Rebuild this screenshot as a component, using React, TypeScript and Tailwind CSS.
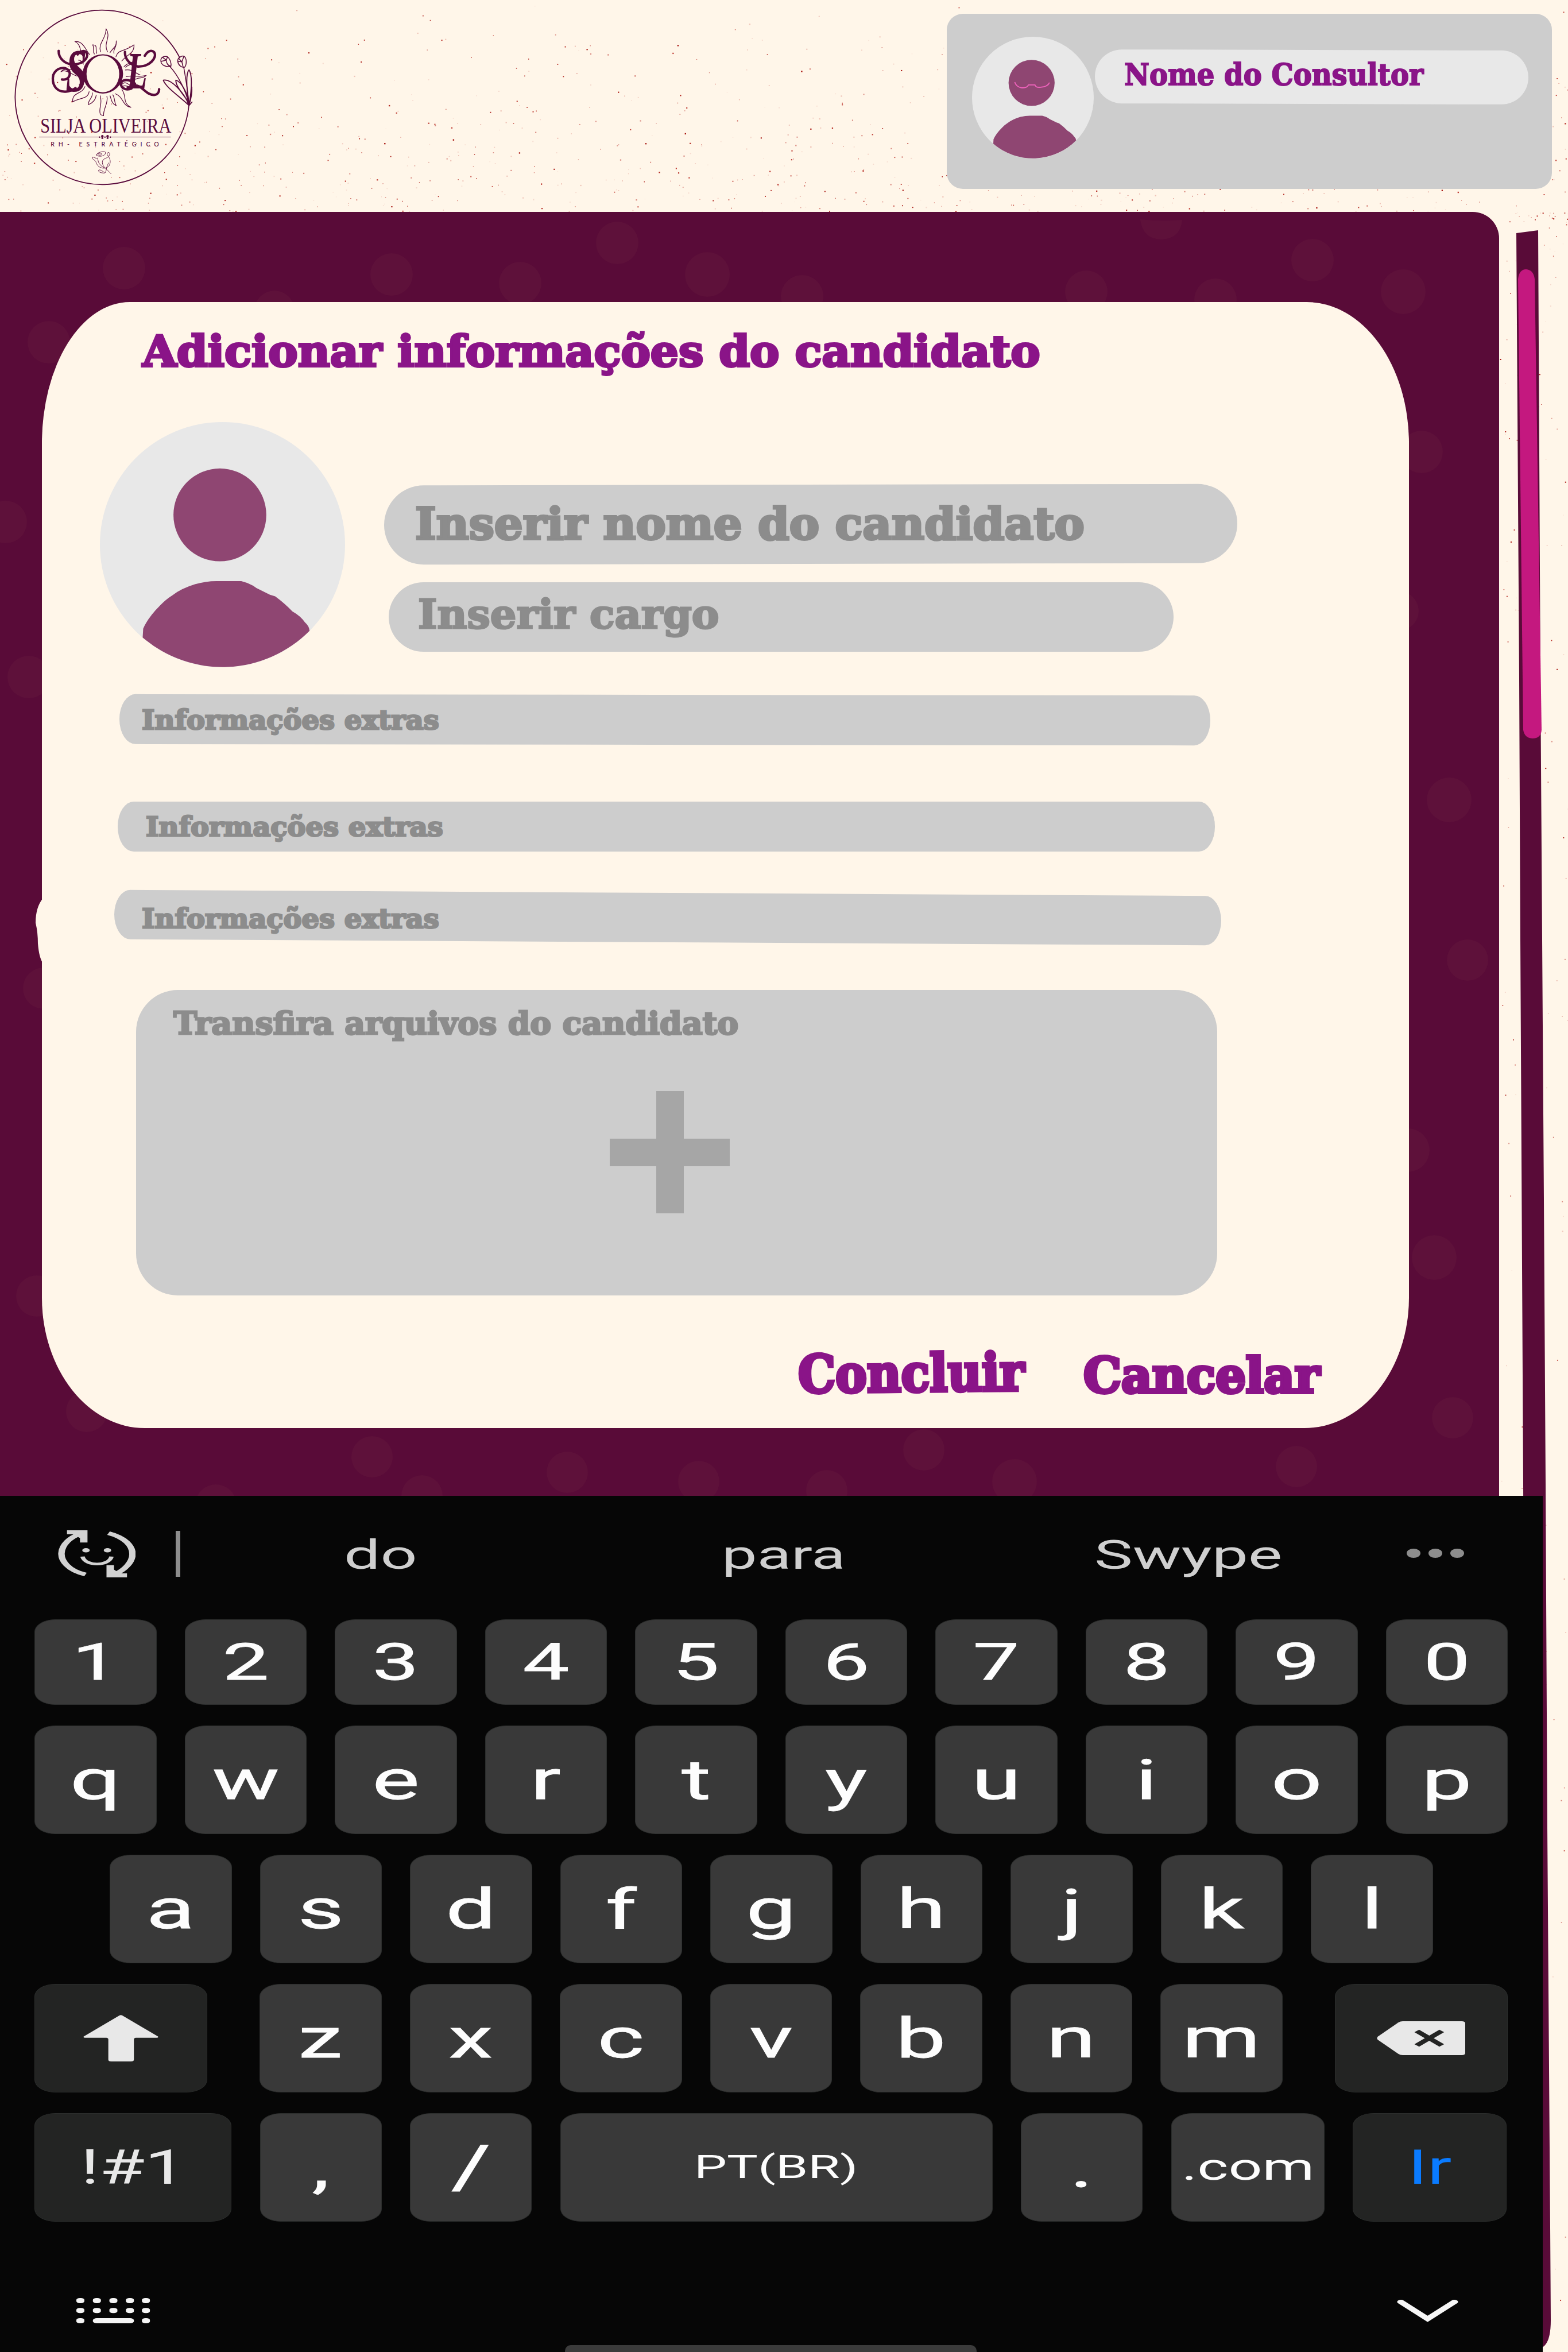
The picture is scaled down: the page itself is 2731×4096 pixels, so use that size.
import { useLayoutEffect, useRef, useState } from "react";
import type { ReactNode } from "react";

const SLAB = "font-['DejaVu_Serif',serif] font-bold leading-none";

/** Text stretched horizontally so that it fills exactly `width` pixels. */
function FitText({ width, className = "", children }: { width: number; className?: string; children: ReactNode }) {
  const ref = useRef<HTMLSpanElement>(null);
  const [scale, setScale] = useState(1);
  useLayoutEffect(() => {
    if (ref.current) setScale(width / ref.current.offsetWidth);
  }, [width]);
  return (
    <span className="block shrink-0" style={{ width }}>
      <span
        ref={ref}
        className={`inline-block origin-left whitespace-nowrap align-top ${className}`}
        style={{ transform: `scaleX(${scale})` }}
      >
        {children}
      </span>
    </span>
  );
}

function makeSpecks() {
  let seed = 20417;
  const rnd = () => {
    seed = (seed * 1103515245 + 12345) % 2147483648;
    return seed / 2147483648;
  };
  const tones = ["#a8140f", "#c2453c", "#d98a80", "#efc4b8", "#b52a22", "#f5d9cd"];
  const out: { x: number; y: number; s: number; c: string }[] = [];
  for (let i = 0; i < 950; i++) {
    out.push({ x: rnd() * 2731, y: Math.sqrt(rnd()) * 370, s: 0.9 + rnd() * 1.5, c: tones[Math.floor(rnd() * 6)] });
  }
  for (let i = 0; i < 170; i++) {
    const t = rnd();
    out.push({ x: 2612 + rnd() * 119, y: 370 + t * t * 3726, s: 0.9 + rnd() * 1.3, c: tones[Math.floor(rnd() * 6)] });
  }
  return out;
}
const SPECKS = makeSpecks();

function Specks() {
  return (
    <svg className="absolute inset-0" width="2731" height="4096" viewBox="0 0 2731 4096" aria-hidden>
      {SPECKS.map((p, i) => (
        <rect key={i} x={p.x} y={p.y} width={p.s} height={p.s} fill={p.c} />
      ))}
    </svg>
  );
}

function Logo() {
  return (
    <svg className="block h-[364px] w-[382px]" viewBox="0 0 1260 1200" fill="none" stroke="#5a0b3d" strokeWidth="4" strokeLinecap="round" strokeLinejoin="round">
      <path strokeWidth="6" d="M1032 330A500 501 0 1 0 1085 605" />
      {/* sun rays */}
      <path d="M578 298C560 250 612 220 609 165C642 215 590 245 618 298M542 310C530 290 544 272 532 257C566 258 545 285 556 306M632 302C648 275 672 268 668 234C672 275 648 280 655 306M666 326C680 280 712 300 770 257C772 310 730 310 700 350M515 313C490 285 480 235 430 238C470 255 455 300 482 330" />
      <path d="M720 402C760 395 775 420 805 430M724 440C770 430 800 445 840 433C820 455 800 440 780 455M712 384C730 358 755 365 774 348C755 375 735 370 722 386M350 412C370 385 420 405 460 395M350 412C380 395 405 425 440 436M450 345C465 345 470 355 480 368M455 484C465 486 470 484 478 482" />
      <path d="M488 497C470 545 415 525 417 585C460 560 505 570 512 526M530 533C535 565 505 570 508 601C535 590 550 570 553 546M576 550C590 600 565 620 576 655C585 665 590 665 595 664C592 625 625 590 614 553M632 550C640 570 640 595 668 607C655 585 660 560 648 544M662 538C710 555 705 612 752 616C700 590 730 550 700 515M700 485C715 465 735 480 750 492M705 495C720 490 735 495 745 503" />
      {/* sun disc */}
      <path fill="#5a0b3d" stroke="none" fillRule="evenodd" d="M591 311A116 113 0 1 0 591 537A116 113 0 1 0 591 311ZM591 318A94 106 0 1 1 591 530A94 106 0 1 1 591 318Z" />
      {/* monogram letters with their swashes */}
      <g fill="#5a0b3d" stroke="none" fontFamily="'Liberation Serif', serif" fontStyle="italic" fontWeight="700">
        <text x="378" y="524" fontSize="346" textLength="122" lengthAdjust="spacingAndGlyphs">S</text>
        <text x="728" y="508" fontSize="300" textLength="118" lengthAdjust="spacingAndGlyphs">L</text>
      </g>
      <path strokeWidth="14" d="M337 292C336 334 372 370 424 370C490 366 512 320 496 300C485 288 460 292 446 312M356 456C395 462 408 430 396 406C375 380 325 385 306 430C295 480 320 530 378 526C400 524 420 516 434 506" />
      <path strokeWidth="14" d="M718 298C716 336 744 372 792 382C860 384 905 330 886 300C870 284 846 294 832 320M770 488C820 490 835 545 885 545C905 544 915 530 914 512M775 480C740 450 700 455 694 480C695 510 730 520 755 508" />
      {/* tulips */}
      <path strokeWidth="5" d="M978 384C1020 430 1070 520 1085 600M1056 388C1066 450 1080 520 1085 600M924 350C922 320 960 320 964 328C980 340 985 370 982 380C960 388 925 375 924 350ZM935 330L955 345L962 327M928 352L955 345C955 360 965 378 980 380M1021 350C1020 330 1045 318 1058 323C1075 335 1072 375 1060 386C1040 390 1022 370 1021 350ZM1028 336L1045 355L1056 324M1022 352L1045 355L1052 384" />
      <path strokeWidth="6" d="M1085 605C1040 560 950 500 938 460C985 450 1065 540 1085 605M1085 590C1060 550 1010 500 1010 460C1040 465 1080 540 1085 590M1085 590C1070 500 1068 420 1086 401C1105 430 1103 500 1087 600C1100 560 1104 530 1102 500M1087 605L1103 586" />
      <g fill="#5a0b3d" stroke="none">
        <text x="232" y="760" fontSize="117" fontFamily="'Liberation Serif', serif" textLength="752" lengthAdjust="spacingAndGlyphs">SILJA OLIVEIRA</text>
        <text x="291" y="842" fontSize="35" fontFamily="Lato, sans-serif" fontWeight="500" textLength="622">RH- ESTRATÉGICO</text>
        <circle cx="588" cy="782" r="7" />
        <circle cx="588" cy="792" r="6" />
        <circle cx="618" cy="782" r="7" />
        <circle cx="618" cy="792" r="6" />
        <circle cx="603" cy="787" r="4" />
        <circle cx="572" cy="787" r="4" />
        <circle cx="634" cy="787" r="4" />
      </g>
      <path strokeWidth="2" d="M226 787H576M630 787H980" />
      {/* rose */}
      <path strokeWidth="3" d="M556 893C545 880 590 865 605 873C612 890 580 905 556 893C550 885 575 875 585 882C590 890 570 893 566 890M530 903C540 898 545 912 560 908M530 903C528 920 548 915 553 935C565 970 610 975 628 950C640 925 630 905 616 890C612 870 635 872 630 888C620 915 585 905 588 935C592 960 610 968 638 998M562 910C562 935 575 950 600 965M625 935C605 960 615 995 598 994C585 993 565 990 566 978C575 970 590 985 600 990" />
    </svg>
  );
}

function Avatar({ className, glasses = false }: { className: string; glasses?: boolean }) {
  return (
    <svg className={className} viewBox="0 0 470 470" preserveAspectRatio="none">
      <circle cx="235" cy="235" r="235" fill="#e8e8e8" />
      <circle cx="230" cy="178" r="89" fill="#8f4672" />
      <path
        fill="#8f4672"
        d="M82 413L83 396Q92 375 115 352Q126 340 139 332Q156 319 182 311Q205 304 230 305H271Q290 310 300 318L326 331L336 334Q355 348 369 363Q385 372 393 384Q401 391 402 400A235 235 0 0 1 82 413Z"
      />
      {glasses && (
        <path fill="none" stroke="#f063bd" strokeWidth="4" d="M165 175Q170 192 190 197Q212 199 218 186H243Q246 197 265 195Q292 193 299 177" />
      )}
    </svg>
  );
}

const DOTS: [number, number, number][] = [
  [216, 467, 37], [682, 478, 37], [478, 541, 35], [906, 493, 37], [1075, 423, 37], [1232, 478, 39],
  [1397, 516, 37], [85, 596, 37], [10, 909, 37], [50, 1179, 37], [1892, 508, 37], [2117, 522, 37],
  [2286, 453, 37], [2444, 508, 39], [2476, 787, 37], [2437, 1064, 34], [76, 1721, 36], [64, 2257, 36],
  [151, 2458, 36], [648, 2537, 36], [735, 2605, 36], [376, 2621, 36], [988, 2564, 36], [1217, 2580, 36],
  [1440, 2596, 36], [1609, 2525, 36], [1767, 2580, 39], [2258, 2554, 36], [2524, 1393, 39], [2556, 1672, 36],
  [2452, 2003, 38], [2498, 2190, 39], [2530, 2469, 36],
];

function PanelDots() {
  return (
    <svg className="absolute inset-0" width="2611" height="2236" viewBox="0 369 2611 2236" fill="#5e113a" aria-hidden>
      {DOTS.map(([x, y, r]) => (
        <circle key={`${x}-${y}`} cx={x} cy={y} r={r} />
      ))}
      <path d="M1986 382Q2022 386 2059 383Q2056 416 2022 417Q1990 416 1986 382Z" />
    </svg>
  );
}

function ScrollBar() {
  return (
    <svg className="absolute inset-0" width="2731" height="4096" viewBox="0 0 2731 4096" aria-hidden>
      <path fill="#590b38" d="M2641 406L2679 401L2683 1183L2689 2089L2692 2585L2695 3184L2700 3879L2701 4041Q2701 4080 2686 4088H2660L2653 2585L2648 1636L2646 1183Z" />
      <path fill="#c4187f" d="M2644 486Q2646 469 2658 469Q2671 470 2673 486L2685 1271Q2684 1286 2669 1286Q2655 1285 2653 1271Z" />
    </svg>
  );
}

function Field({ className, bg, children }: { className: string; bg: string; children: ReactNode }) {
  return (
    <div className={`relative flex items-center text-[#8c8c8c] ${className}`}>
      <span className={`absolute inset-0 bg-[#cdcdcd] ${bg}`} />
      <div className="relative">{children}</div>
    </div>
  );
}

function CandidateForm() {
  return (
    <section className="relative mt-[157px] ml-[73px] flex h-[1961px] w-[2381px] flex-col rounded-[153px_178px_182px_179px/246px_246px_227px_227px] bg-[#fff6e9]">
      <svg className="absolute top-[1038px] -left-[11px] h-[114px] w-[13px]" viewBox="0 0 13 114" fill="#fff6e9">
        <path d="M13 0Q0 16 0 43Q4 60 4 79Q6 104 13 114Z" />
      </svg>
      <h1 className="mt-[49px] ml-[175px] text-[75px] leading-none text-[#8a1488]">
        <FitText width={1564} className={`${SLAB} [-webkit-text-stroke:4px_#8a1488]`}>Adicionar informações do candidato</FitText>
      </h1>
      <div className="mt-[85px] ml-[101px] flex h-[427px]">
        <Avatar className="size-[427px] shrink-0" />
        <div className="mt-[109px] ml-[68px] flex flex-col gap-[32px]">
          <Field className="h-[138px] w-[1486px] pl-[54px]" bg="rounded-[69px] -skew-y-[0.1deg]">
            <FitText width={1166} className={`${SLAB} text-[76px] [-webkit-text-stroke:4px_#8c8c8c]`}>Inserir nome do candidato</FitText>
          </Field>
          <Field className="ml-[8px] h-[121px] w-[1367px] pb-[10px] pl-[51px]" bg="rounded-[62px]">
            <FitText width={524} className={`${SLAB} text-[69px] [-webkit-text-stroke:3px_#8c8c8c]`}>Inserir cargo</FitText>
          </Field>
        </div>
      </div>
      <Field className="mt-[48px] ml-[135px] h-[87px] w-[1900px] pl-[39px]" bg="rounded-[28px/43px] skew-y-[0.07deg]">
        <FitText width={518} className={`${SLAB} text-[47px] [-webkit-text-stroke:3px_#8c8c8c]`}>Informações extras</FitText>
      </Field>
      <Field className="mt-[99px] ml-[132px] h-[87px] w-[1911px] pl-[49px]" bg="rounded-[28px/43px]">
        <FitText width={518} className={`${SLAB} text-[47px] [-webkit-text-stroke:3px_#8c8c8c]`}>Informações extras</FitText>
      </Field>
      <Field className="mt-[72px] ml-[126px] h-[86px] w-[1928px] pl-[48px] pt-[3px]" bg="rounded-[28px/43px] skew-y-[0.32deg]">
        <FitText width={518} className={`${SLAB} text-[47px] [-webkit-text-stroke:3px_#8c8c8c]`}>Informações extras</FitText>
      </Field>
      <div className="mt-[83px] ml-[164px] flex h-[532px] w-[1883px] flex-col rounded-[73px] bg-[#cdcdcd] pt-[31px] text-[#8c8c8c]">
        <div className="ml-[65px]">
          <FitText width={984} className={`${SLAB} text-[54px] [-webkit-text-stroke:3px_#8c8c8c]`}>Transfira arquivos do candidato</FitText>
        </div>
        <svg className="mt-[91px] ml-[825px] h-[213px] w-[209px]" viewBox="0 0 209 213" fill="#a6a6a6">
          <path d="M81 0H129V83H209V131H129V213H81V131H0V83H81Z" />
        </svg>
      </div>
      <div className="mt-[88px] ml-[1317px] flex gap-[103px] text-[#8a1488]">
        <button className="block -rotate-[0.6deg]">
          <FitText width={394} className={`${SLAB} text-[90px] [-webkit-text-stroke:6px_#8a1488]`}>Concluir</FitText>
        </button>
        <button className="mt-[10px] block">
          <FitText width={412} className={`${SLAB} text-[84px] [-webkit-text-stroke:6px_#8a1488]`}>Cancelar</FitText>
        </button>
      </div>
    </section>
  );
}

function Key({ children, className = "", dark = false, row = "h-[189px]" }: { children: ReactNode; className?: string; dark?: boolean; row?: string }) {
  return (
    <div className={`flex shrink-0 items-center justify-center rounded-[36px/22px] border border-[#2b2d2c] ${row} ${dark ? "bg-[#232423]" : "bg-[#393939]"} ${className}`}>
      {children}
    </div>
  );
}

function Glyph({ children, className = "text-[96px]" }: { children: ReactNode; className?: string }) {
  return <span className={`inline-block scale-x-[1.62] leading-none font-normal text-[#fdfdfd] [-webkit-text-stroke:0.8px_#fdfdfd] ${className}`}>{children}</span>;
}

function Keyboard() {
  return (
    <div className="relative flex h-[1491px] w-[2687px] flex-col bg-[#060606] font-['Roboto',sans-serif]">
      <div className="flex h-[215px] text-[70px] leading-[1] text-[#cfcfcf]">
        <svg className="mt-[60px] ml-[101px] h-[82px] w-[135px] shrink-0" viewBox="116 160 155 165" preserveAspectRatio="none" fill="none" stroke="#d2d2d2" strokeWidth="13">
          <path d="M171 315C135 300 122 265 123 240C124 210 140 185 160 172M217 170C250 185 265 215 265 243C265 270 250 300 228 315" />
          <path strokeWidth="9" d="M165 252C170 287 218 287 223 252" />
          <path fill="#d2d2d2" stroke="none" d="M134 160H175V203H160V187L146 174H134ZM254 325H213V282H228V298L240 311H254Z" />
          <circle cx="172" cy="230" r="7.5" fill="#d2d2d2" stroke="none" />
          <circle cx="215" cy="230" r="7.5" fill="#d2d2d2" stroke="none" />
        </svg>
        <div className="mt-[61px] ml-[70px] h-[80px] w-[8px] bg-[#8d8d8d]" />
        <div className="mt-[68px] ml-[285px]"><FitText width={127}>do</FitText></div>
        <div className="mt-[68px] ml-[531px]"><FitText width={216}>para</FitText></div>
        <div className="mt-[68px] ml-[433px]"><FitText width={328}>Swype</FitText></div>
        <div className="mt-[92px] ml-[216px] flex gap-[14px]">
          <span className="h-[16px] w-[24px] rounded-[50%] bg-[#8d8d8d]" />
          <span className="h-[16px] w-[24px] rounded-[50%] bg-[#8d8d8d]" />
          <span className="h-[16px] w-[24px] rounded-[50%] bg-[#8d8d8d]" />
        </div>
      </div>
      <div className="flex flex-col gap-[36px] pl-[60px]">
        <div className="flex gap-[49px]">
          {"1234567890".split("").map((c) => (
            <Key key={c} className="w-[212.5px]" row="h-[149px]"><Glyph className="text-[89px]">{c}</Glyph></Key>
          ))}
        </div>
        <div className="flex gap-[49px]">
          {"qwertyuiop".split("").map((c) => (
            <Key key={c} className="w-[212.5px]"><Glyph>{c}</Glyph></Key>
          ))}
        </div>
        <div className="flex gap-[49px] pl-[131px]">
          {"asdfghjkl".split("").map((c) => (
            <Key key={c} className="w-[212.5px]"><Glyph>{c}</Glyph></Key>
          ))}
        </div>
        <div className="flex gap-[49px]">
          <Key dark className="mr-[42px] w-[301px]">
            <svg className="h-[81px] w-[131px]" viewBox="0 0 150 173" preserveAspectRatio="none" fill="#e8e8e8">
              <path d="M72 2Q75 -1 78 2L149 80Q151 85 146 85H105Q101 86 101 91V166Q101 173 95 173H56Q50 173 50 166V91Q50 86 46 85H4Q-1 85 1 80Z" />
            </svg>
          </Key>
          {"zxcvbnm".split("").map((c) => (
            <Key key={c} className="w-[212.5px]"><Glyph>{c}</Glyph></Key>
          ))}
          <Key dark className="ml-[42px] w-[301px]">
            <svg className="h-[59px] w-[154px]" viewBox="0 0 177 126" preserveAspectRatio="none">
              <path fill="#e8e8e8" d="M52 0H170Q177 0 177 8V118Q177 126 170 126H52Q47 126 43 121L2 69Q-1 63 2 57L43 5Q47 0 52 0Z" />
              <path stroke="#232423" strokeWidth="13" d="M80 36L130 90M130 36L80 90" />
            </svg>
          </Key>
        </div>
        <div className="flex gap-[49.5px]">
          <Key dark className="w-[343px] text-[83px] leading-none text-[#e8e8e8]"><FitText width={184}>!#1</FitText></Key>
          <Key className="w-[212px]"><Glyph>,</Glyph></Key>
          <Key className="w-[212px]"><Glyph className="text-[104px]">/</Glyph></Key>
          <Key className="w-[753px] text-[55px] leading-none text-[#fdfdfd]"><FitText width={286}>PT(BR)</FitText></Key>
          <Key className="w-[212px]"><Glyph>.</Glyph></Key>
          <Key className="w-[267px] text-[65px] leading-none text-[#fdfdfd]"><FitText width={231}>.com</FitText></Key>
          <Key dark className="w-[268px] text-[83px] leading-none text-[#0a7bff]"><FitText width={77}>Ir</FitText></Key>
        </div>
      </div>
      <div className="mt-[133px] flex justify-between pr-[147px] pl-[133px]">
        <svg className="h-[44px] w-[129px]" viewBox="0 0 148 94" preserveAspectRatio="none" fill="#f4f4f4">
          {[0, 33, 66, 99, 131].map((x) => (
            <g key={x}>
              <rect x={x} y="0" width="16" height="19" rx="7" />
              <rect x={x} y="37" width="16" height="19" rx="7" />
            </g>
          ))}
          <rect x="0" y="75" width="16" height="19" rx="7" />
          <rect x="33" y="75" width="82" height="19" rx="8" />
          <rect x="131" y="75" width="16" height="19" rx="7" />
        </svg>
        <svg className="mt-[3px] h-[39px] w-[107px]" viewBox="0 0 123 83" preserveAspectRatio="none" fill="none" stroke="#f6f6f6" strokeWidth="15" strokeLinecap="round">
          <path d="M8 8L61.500 71L115 8" />
        </svg>
      </div>
      <div className="mt-auto ml-[984px] h-[12px] w-[717px] rounded-t-[10px] bg-[#3b3b3b]" />
    </div>
  );
}

export default function App() {
  return (
    <main className="relative h-[4096px] w-[2731px] overflow-hidden bg-[#fff6e9]">
      <Specks />
      <ScrollBar />
      <header className="relative flex h-[369px] items-start justify-between pr-[28px]">
        <Logo />
        <div className="mt-[24px] flex h-[305px] w-[1054px] rounded-[28px] bg-[#cdcdcd]">
          <Avatar glasses className="mt-[40px] ml-[44px] size-[212px] shrink-0" />
          <div className="relative mt-[63px] ml-[2px] flex h-[94px] w-[755px] items-center pb-[9px] pl-[51px] text-[#8a1488]">
            <span className="absolute inset-0 skew-y-[0.15deg] rounded-[47px] bg-[#e8e8e8]" />
            <div className="relative">
              <FitText width={521} className={`${SLAB} text-[52px] [-webkit-text-stroke:2px_#8a1488]`}>Nome do Consultor</FitText>
            </div>
          </div>
        </div>
      </header>
      <div className="relative flex h-[2236px] w-[2611px] flex-col overflow-hidden rounded-tr-[46px] bg-[#590b38]">
        <PanelDots />
        <CandidateForm />
      </div>
      <Keyboard />
    </main>
  );
}
